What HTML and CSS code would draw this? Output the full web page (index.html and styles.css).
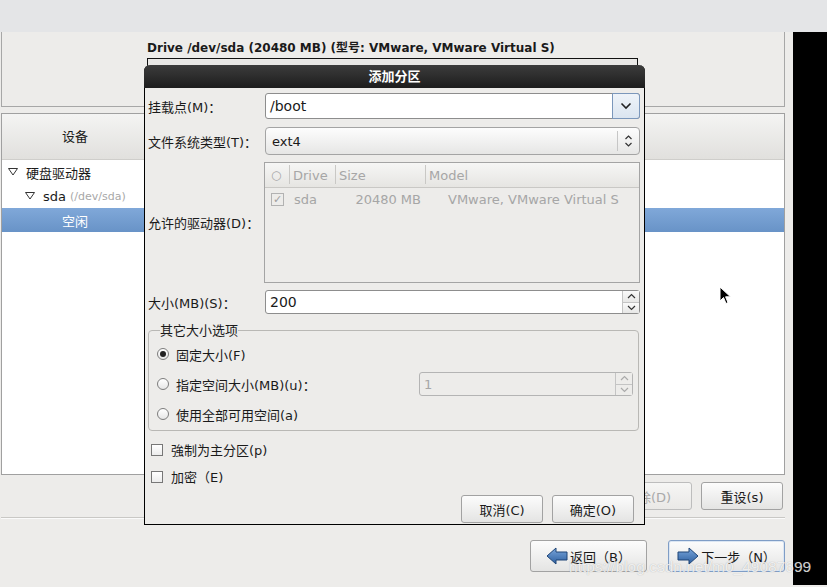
FILE: index.html
```html
<!DOCTYPE html>
<html lang="zh-CN">
<head>
    <meta charset="UTF-8">
    <title>添加分区</title>
    <link rel="stylesheet" href="styles.css">
</head>
<body>
    <div class="topbar"></div>

    <div class="screen">
        <div class="installer">
            <section class="drive-panel">
                <p class="drive-title">Drive /dev/sda (20480 MB) (型号: VMware, VMware Virtual S)</p>
                <div class="drive-map"></div>
            </section>

            <section class="tree-panel">
                <div class="tree-head">
                    <span class="col-device">设备</span>
                </div>
                <ul class="tree">
                    <li class="lvl1">
                        <svg class="twisty" width="10" height="8" viewBox="0 0 10 8"><polygon points="0.5,0.5 9.5,0.5 5,7" fill="none" stroke="#333" stroke-width="1"/></svg>
                        硬盘驱动器
                    </li>
                    <li class="lvl2">
                        <svg class="twisty" width="10" height="8" viewBox="0 0 10 8"><polygon points="0.5,0.5 9.5,0.5 5,7" fill="none" stroke="#333" stroke-width="1"/></svg>
                        sda <span class="dim">(/dev/sda)</span>
                    </li>
                    <li class="lvl3 selected">空闲</li>
                </ul>
            </section>

            <div class="tree-actions">
                <button class="btn">创建(C)</button>
                <button class="btn">编辑(E)</button>
                <button class="btn" disabled>删除(D)</button>
                <button class="btn">重设(s)</button>
            </div>

            <hr class="sep">

            <div class="nav">
                <button class="btn nav-btn">
                    <svg width="22" height="18" viewBox="0 0 22 18">
                        <defs>
                            <linearGradient id="arrowBlue" x1="0" y1="0" x2="0" y2="1">
                                <stop offset="0" stop-color="#7aa6dc"/>
                                <stop offset="1" stop-color="#2d5f9f"/>
                            </linearGradient>
                        </defs>
                        <polygon points="1,9 10,1 10,5 21,5 21,13 10,13 10,17" fill="url(#arrowBlue)" stroke="#1f4577" stroke-width="1"/>
                    </svg>
                    返回（B）
                </button>
                <button class="btn nav-btn focus">
                    <svg width="22" height="18" viewBox="0 0 22 18">
                        <polygon points="21,9 12,1 12,5 1,5 1,13 12,13 12,17" fill="url(#arrowBlue)" stroke="#1f4577" stroke-width="1"/>
                    </svg>
                    下一步（N）
                </button>
            </div>
        </div>
        <div class="blackbar"></div>
    </div>

    <!-- 添加分区 dialog -->
    <div class="dialog">
        <div class="dialog-title">添加分区</div>
        <div class="dialog-body">
            <div class="row row-mount">
                <label>挂载点(M)：</label>
                <div class="combo-entry">
                    <span class="entry-text">/boot</span>
                    <span class="drop-btn">
                        <svg width="12" height="8" viewBox="0 0 12 8"><polyline points="1.5,1.5 6,6 10.5,1.5" fill="none" stroke="#222" stroke-width="1.6"/></svg>
                    </span>
                </div>
            </div>

            <div class="row row-fs">
                <label>文件系统类型(T)：</label>
                <div class="combo">
                    <span class="combo-text">ext4</span>
                    <span class="combo-arrows">
                        <svg width="9" height="14" viewBox="0 0 9 14"><polyline points="1.5,5 4.5,2 7.5,5" fill="none" stroke="#333" stroke-width="1.2"/><polyline points="1.5,9 4.5,12 7.5,9" fill="none" stroke="#333" stroke-width="1.2"/></svg>
                    </span>
                </div>
            </div>

            <div class="row row-drives">
                <label>允许的驱动器(D)：</label>
                <div class="drive-table">
                    <div class="th th-check">○</div>
                    <div class="th">Drive</div>
                    <div class="th">Size</div>
                    <div class="th">Model</div>
                    <div class="td td-check"><span class="tick">✓</span></div>
                    <div class="td">sda</div>
                    <div class="td td-size">20480 MB</div>
                    <div class="td td-model">VMware, VMware Virtual S</div>
                </div>
            </div>

            <div class="row row-size">
                <label>大小(MB)(S)：</label>
                <div class="spin">
                    <span class="entry-text">200</span>
                    <span class="spin-btns">
                        <span><svg width="9" height="6" viewBox="0 0 9 6"><polyline points="1,5 4.5,1.5 8,5" fill="none" stroke="#333" stroke-width="1.2"/></svg></span>
                        <span><svg width="9" height="6" viewBox="0 0 9 6"><polyline points="1,1 4.5,4.5 8,1" fill="none" stroke="#333" stroke-width="1.2"/></svg></span>
                    </span>
                </div>
            </div>

            <fieldset class="size-options">
                <legend>其它大小选项</legend>
                <div class="radio-row"><span class="radio checked"></span>固定大小(F)</div>
                <div class="radio-row">
                    <span class="radio"></span>指定空间大小(MB)(u)：
                    <div class="spin spin-disabled">
                        <span class="entry-text">1</span>
                        <span class="spin-btns">
                            <span><svg width="9" height="6" viewBox="0 0 9 6"><polyline points="1,5 4.5,1.5 8,5" fill="none" stroke="#aaa" stroke-width="1.2"/></svg></span>
                            <span><svg width="9" height="6" viewBox="0 0 9 6"><polyline points="1,1 4.5,4.5 8,1" fill="none" stroke="#aaa" stroke-width="1.2"/></svg></span>
                        </span>
                    </div>
                </div>
                <div class="radio-row"><span class="radio"></span>使用全部可用空间(a)</div>
            </fieldset>

            <div class="check-row"><span class="checkbox"></span>強制为主分区(p)</div>
            <div class="check-row"><span class="checkbox"></span>加密（E)</div>

            <div class="dialog-buttons">
                <button class="btn">取消(C)</button>
                <button class="btn">确定(O)</button>
            </div>
        </div>
    </div>

    <svg class="pointer" width="13" height="19" viewBox="0 0 13 19">
        <polygon points="1,1 1,15 4.5,11.5 7,17.5 9,16.6 6.6,10.8 11.5,10.8" fill="#000" stroke="#fff" stroke-width="1"/>
    </svg>

    <div class="watermark">https://blog.csdn.net/m0_49087699</div>
</body>
</html>
```

FILE: styles.css
```css
/* Base */
body {
    margin: 0;
    width: 827px;
    height: 587px;
    overflow: hidden;
    position: relative;
    background-color: #edecea;
    font-family: 'DejaVu Sans', 'Noto Sans CJK SC', sans-serif;
    font-size: 13px;
    color: #1a1a1a;
}

.topbar {
    height: 32px;
    background-color: #e4e5e7;
}

.screen {
    display: flex;
}

.installer {
    width: 784px;
    padding: 0 8px 0 1px;
}

.blackbar {
    flex: 1;
    height: 553px;
    background-color: #000;
}

/* Drive panel */
.drive-panel {
    height: 74px;
    border: 1px solid #a7a7a7;
    border-top: none;
    padding-left: 145px;
    box-sizing: content-box;
}
.drive-title {
    margin: 0;
    padding-top: 9px;
    line-height: 15px;
    font-weight: bold;
    font-size: 12px;
}
.drive-map {
    margin-top: 2px;
    width: 489px;
    height: 40px;
    border: 1px solid #111;
    background-color: #e9e8e6;
}

/* Tree panel */
.tree-panel {
    margin-top: 6px;
    height: 360px;
    border: 1px solid #a0a0a0;
    background-color: #fff;
}
.tree-head {
    height: 45px;
    display: flex;
    align-items: center;
    border-bottom: 1px solid #cfcecb;
    background: linear-gradient(#f4f4f3, #e1e0dd);
}
.col-device {
    width: 146px;
    text-align: center;
    margin-top: -2px;
}
.tree {
    list-style: none;
    margin: 0;
    padding: 0;
}
.tree li {
    height: 24px;
    display: flex;
    align-items: center;
    gap: 8px;
}
.tree .lvl1 {
    padding-left: 6px;
}
.tree .lvl2 {
    padding-left: 23px;
}
.tree .lvl3 {
    padding-left: 60px;
}
.dim {
    color: #a8a8a8;
    font-size: 11px;
    margin-left: -4px;
}
.tree .selected {
    background: linear-gradient(#80a8d9, #6893c7);
    color: #fff;
}

/* Buttons */
.btn {
    font-family: inherit;
    font-size: 13px;
    color: #1a1a1a;
    height: 28px;
    width: 82px;
    padding: 0;
    border: 1px solid #a2a2a2;
    border-radius: 3px;
    background: linear-gradient(#fcfcfc, #e4e4e3);
}
.btn:disabled {
    color: #a9a9a9;
    background: linear-gradient(#f6f6f5, #e9e8e6);
    border-color: #bdbdbd;
    padding-right: 6px;
}

.tree-actions {
    display: flex;
    justify-content: flex-end;
    gap: 9px;
    margin-top: 7px;
    padding-right: 2px;
}

.sep {
    margin: 7px 0 0;
    border: none;
    border-top: 1px solid #c9c8c5;
    border-bottom: 1px solid #fafafa;
}

.nav {
    display: flex;
    justify-content: flex-end;
    gap: 21px;
    margin-top: 21px;
}
.nav-btn {
    width: 117px;
    height: 32px;
    display: flex;
    align-items: center;
    justify-content: center;
    gap: 2px;
}
.nav-btn.focus {
    border-color: #7f9dc6;
    box-shadow: inset 0 0 0 1px #dbe6f3;
}

/* Dialog */
.dialog {
    position: absolute;
    left: 144px;
    top: 65px;
    width: 501px;
    height: 460px;
    box-sizing: border-box;
    border: 1px solid #000;
    border-top: none;
    border-radius: 6px 6px 0 0;
    background-color: #edecea;
}
.dialog-title {
    height: 23px;
    margin: 0 -1px;
    border-radius: 6px 6px 0 0;
    background: linear-gradient(#3c3c3c, #1d1d1d);
    color: #fff;
    font-weight: bold;
    text-align: center;
    line-height: 23px;
}
.dialog-body {
    padding: 5px 4px 0 3px;
}

.row {
    display: grid;
    grid-template-columns: 117px 1fr;
    align-items: center;
}
.row-fs {
    margin-top: 8px;
}
.row-drives {
    margin-top: 7px;
}
.row-size {
    margin-top: 7px;
}

.combo-entry, .spin {
    height: 26px;
    box-sizing: border-box;
    display: flex;
    align-items: center;
    background-color: #fff;
    border: 1px solid #8d8d8d;
    border-radius: 3px;
}
.entry-text {
    flex: 1;
    padding-left: 4px;
    font-size: 14px;
}
.drop-btn {
    width: 28px;
    height: 26px;
    margin: -1px -1px -1px 0;
    box-sizing: border-box;
    display: flex;
    align-items: center;
    justify-content: center;
    border: 1px solid #7b97bb;
    border-radius: 0 3px 3px 0;
    background: linear-gradient(#eef3f9, #dbe5f0);
}

.combo {
    height: 28px;
    box-sizing: border-box;
    display: flex;
    align-items: center;
    border: 1px solid #a4a4a4;
    border-radius: 4px;
    background: linear-gradient(#fdfdfd, #e6e6e5);
}
.combo-text {
    flex: 1;
    padding-left: 6px;
}
.combo-arrows {
    width: 21px;
    height: 20px;
    display: flex;
    align-items: center;
    justify-content: center;
    border-left: 1px solid #c6c6c6;
}

.drive-table {
    margin-left: -1px;
    height: 121px;
    box-sizing: border-box;
    border: 1px solid #a4a4a4;
    display: grid;
    grid-template-columns: 24px 46px 90px 1fr;
    grid-template-rows: 25px 23px;
    align-content: start;
    color: #a6a6a6;
}
.th {
    display: flex;
    align-items: center;
    padding-left: 4px;
    background: linear-gradient(#f6f6f5, #e6e5e2);
    border-bottom: 1px solid #c9c8c5;
    position: relative;
}
.th + .th::before {
    content: "";
    position: absolute;
    left: 0;
    top: 2px;
    bottom: 3px;
    border-left: 1px solid #c9c8c5;
}
.th-check {
    padding-left: 6px;
    font-size: 12px;
}
.td {
    display: flex;
    align-items: center;
    padding-left: 5px;
}
.td-check {
    padding-left: 6px;
}
.td-size {
    justify-content: flex-end;
    padding-right: 4px;
}
.td-model {
    padding-left: 23px;
    white-space: nowrap;
}
.tick {
    width: 11px;
    height: 11px;
    border: 1px solid #b2b2b2;
    display: flex;
    align-items: center;
    justify-content: center;
    font-size: 11px;
    color: #a0a0a0;
}

.spin {
    height: 24px;
}
.spin-btns {
    width: 16px;
    align-self: stretch;
    display: flex;
    flex-direction: column;
    border-left: 1px solid #c4c4c4;
}
.spin-btns span {
    flex: 1;
    display: flex;
    align-items: center;
    justify-content: center;
    background: linear-gradient(#fafafa, #e7e7e6);
}
.spin-btns span + span {
    border-top: 1px solid #c4c4c4;
}

/* Size options */
.size-options {
    margin: 9px 1px 0 0;
    padding: 1px 5px 1px 8px;
    border: 1px solid #b9b8b5;
    border-radius: 4px;
}
.size-options legend {
    padding: 0;
    margin-left: 3px;
    line-height: 15px;
}
.radio-row {
    height: 30px;
    display: flex;
    align-items: center;
}
.radio {
    width: 10px;
    height: 10px;
    margin-right: 7px;
    border: 1px solid #7d7d7d;
    border-radius: 50%;
    background: linear-gradient(#fff, #e6e6e6);
    display: flex;
    align-items: center;
    justify-content: center;
}
.radio.checked::after {
    content: "";
    width: 6px;
    height: 6px;
    border-radius: 50%;
    background-color: #222;
}
.spin-disabled {
    margin-left: auto;
    width: 214px;
    background-color: #edecea;
    border-color: #b4b4b4;
    color: #a6a6a6;
}
.spin-disabled .entry-text {
    font-size: 13px;
}
.spin-disabled .spin-btns span {
    background: #edecea;
}

.check-row {
    height: 27px;
    display: flex;
    align-items: center;
    padding-left: 3px;
}
.checkbox {
    width: 10px;
    height: 10px;
    margin-right: 8px;
    border: 1px solid #777;
    background: linear-gradient(#fff, #ececec);
}
.size-options + .check-row {
    margin-top: 5px;
}

.dialog-buttons {
    display: flex;
    justify-content: flex-end;
    gap: 9px;
    margin-top: 5px;
    padding-right: 6px;
}
.dialog-buttons .btn {
    width: 82px;
    height: 28px;
}

/* Overlays */
.pointer {
    position: absolute;
    left: 719px;
    top: 286px;
}

.watermark {
    position: absolute;
    left: 569px;
    top: 558px;
    font-family: 'Liberation Sans', sans-serif;
    font-size: 15.5px;
    color: rgba(255, 255, 255, 0.8);
    text-shadow: 0 0 1px rgba(90, 90, 90, 0.45);
    white-space: nowrap;
}
```
